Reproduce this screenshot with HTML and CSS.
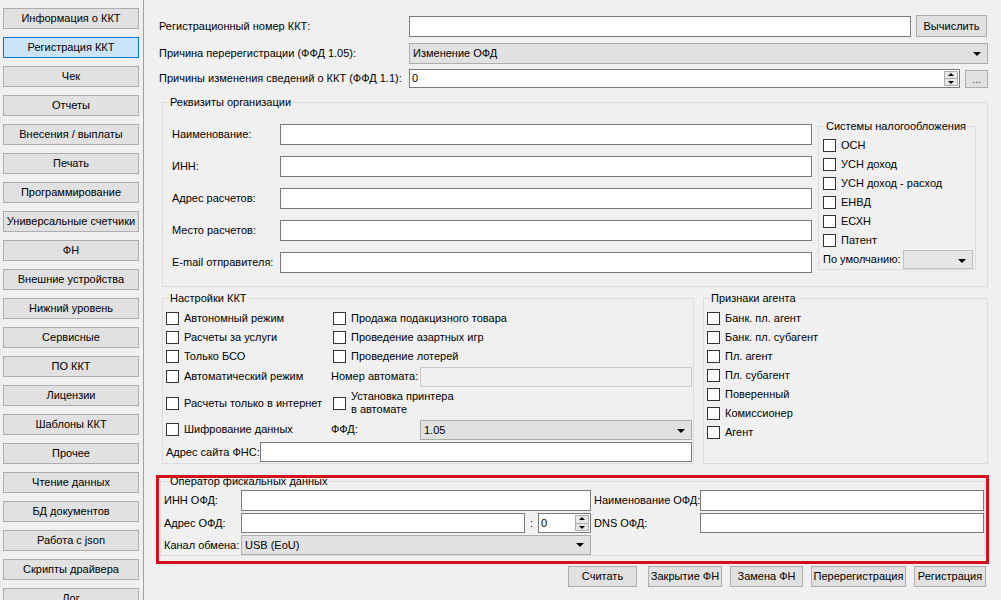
FILE: index.html
```html
<!DOCTYPE html>
<html lang="ru">
<head>
<meta charset="utf-8">
<title>Регистрация ККТ</title>
<link rel="stylesheet" href="styles.css">
</head>
<body>
<div class="app">
  <nav class="side">
    <button class="nav-btn">Информация о ККТ</button>
    <button class="nav-btn active">Регистрация ККТ</button>
    <button class="nav-btn">Чек</button>
    <button class="nav-btn">Отчеты</button>
    <button class="nav-btn">Внесения / выплаты</button>
    <button class="nav-btn">Печать</button>
    <button class="nav-btn">Программирование</button>
    <button class="nav-btn">Универсальные счетчики</button>
    <button class="nav-btn">ФН</button>
    <button class="nav-btn">Внешние устройства</button>
    <button class="nav-btn">Нижний уровень</button>
    <button class="nav-btn">Сервисные</button>
    <button class="nav-btn">ПО ККТ</button>
    <button class="nav-btn">Лицензии</button>
    <button class="nav-btn">Шаблоны ККТ</button>
    <button class="nav-btn">Прочее</button>
    <button class="nav-btn">Чтение данных</button>
    <button class="nav-btn">БД документов</button>
    <button class="nav-btn">Работа с json</button>
    <button class="nav-btn">Скрипты драйвера</button>
    <button class="nav-btn">Лог</button>
  </nav>

  <main class="main">
    <div class="row r1">
      <span class="lbl top-lbl">Регистрационный номер ККТ:</span>
      <div class="edit grow"></div>
      <button class="btn calc">Вычислить</button>
    </div>
    <div class="row r2">
      <span class="lbl top-lbl">Причина перерегистрации (ФФД 1.05):</span>
      <div class="combo grow">Изменение ОФД<span class="arrow"></span></div>
    </div>
    <div class="row r3">
      <span class="lbl top-lbl">Причины изменения сведений о ККТ (ФФД 1.1):</span>
      <div class="edit spin grow">0<span class="spin-btns"><span class="sb up"></span><span class="sb down"></span></span></div>
      <button class="btn dots">...</button>
    </div>

    <fieldset class="group req">
      <legend>Реквизиты организации</legend>
      <div class="req-body">
        <div class="req-form">
          <span class="lbl">Наименование:</span><div class="edit"></div>
          <span class="lbl">ИНН:</span><div class="edit"></div>
          <span class="lbl">Адрес расчетов:</span><div class="edit"></div>
          <span class="lbl">Место расчетов:</span><div class="edit"></div>
          <span class="lbl">E-mail отправителя:</span><div class="edit"></div>
        </div>
        <fieldset class="group tax">
          <legend>Системы налогообложения</legend>
          <div class="chk"><span class="box"></span>ОСН</div>
          <div class="chk"><span class="box"></span>УСН доход</div>
          <div class="chk"><span class="box"></span>УСН доход - расход</div>
          <div class="chk"><span class="box"></span>ЕНВД</div>
          <div class="chk"><span class="box"></span>ЕСХН</div>
          <div class="chk"><span class="box"></span>Патент</div>
          <div class="tax-def">
            <span class="lbl">По умолчанию:</span>
            <div class="combo disabled def-combo"><span class="arrow"></span></div>
          </div>
        </fieldset>
      </div>
    </fieldset>

    <div class="mid">
      <fieldset class="group settings">
        <legend>Настройки ККТ</legend>
        <div class="set-grid">
          <div class="chk"><span class="box"></span>Автономный режим</div>
          <div class="chk c2"><span class="box"></span>Продажа подакцизного товара</div>
          <div class="chk"><span class="box"></span>Расчеты за услуги</div>
          <div class="chk c2"><span class="box"></span>Проведение азартных игр</div>
          <div class="chk"><span class="box"></span>Только БСО</div>
          <div class="chk c2"><span class="box"></span>Проведение лотерей</div>
          <div class="chk"><span class="box"></span>Автоматический режим</div>
          <span class="lbl">Номер автомата:</span>
          <div class="edit disabled"></div>
          <div class="chk"><span class="box"></span>Расчеты только в интернет</div>
          <div class="chk c2 two"><span class="box"></span><span>Установка принтера<br>в автомате</span></div>
          <div class="chk"><span class="box"></span>Шифрование данных</div>
          <span class="lbl">ФФД:</span>
          <div class="combo">1.05<span class="arrow"></span></div>
        </div>
        <div class="fns-row">
          <span class="lbl">Адрес сайта ФНС:</span>
          <div class="edit grow"></div>
        </div>
      </fieldset>

      <fieldset class="group agent">
        <legend>Признаки агента</legend>
        <div class="chk"><span class="box"></span>Банк. пл. агент</div>
        <div class="chk"><span class="box"></span>Банк. пл. субагент</div>
        <div class="chk"><span class="box"></span>Пл. агент</div>
        <div class="chk"><span class="box"></span>Пл. субагент</div>
        <div class="chk"><span class="box"></span>Поверенный</div>
        <div class="chk"><span class="box"></span>Комиссионер</div>
        <div class="chk"><span class="box"></span>Агент</div>
      </fieldset>
    </div>

    <div class="highlight">
      <fieldset class="group ofd">
        <legend>Оператор фискальных данных</legend>
        <div class="ofd-grid">
          <span class="lbl">ИНН ОФД:</span>
          <div class="edit"></div>
          <span class="lbl rl">Наименование ОФД:</span>
          <div class="edit"></div>

          <span class="lbl">Адрес ОФД:</span>
          <div class="addr">
            <div class="edit grow"></div>
            <span class="colon">:</span>
            <div class="edit spin port">0<span class="spin-btns"><span class="sb up"></span><span class="sb down"></span></span></div>
          </div>
          <span class="lbl rl">DNS ОФД:</span>
          <div class="edit"></div>

          <span class="lbl">Канал обмена:</span>
          <div class="combo chan">USB (EoU)<span class="arrow"></span></div>
        </div>
      </fieldset>
    </div>

    <div class="actions">
      <button class="btn a1">Считать</button>
      <button class="btn a2">Закрытие ФН</button>
      <button class="btn a3">Замена ФН</button>
      <button class="btn a4">Перерегистрация</button>
      <button class="btn a5">Регистрация</button>
    </div>
  </main>
</div>
</body>
</html>
```

FILE: styles.css
```css
* { box-sizing: border-box; }

html, body {
  margin: 0;
  padding: 0;
  width: 1001px;
  height: 600px;
  overflow: hidden;
  background: #f0f0f0;
  font-family: "Liberation Sans", Arial, sans-serif;
  font-size: 11px;
  color: #000;
}

.app {
  display: flex;
  height: 600px;
}

/* Sidebar */
.side {
  width: 144px;
  flex: none;
  height: 600px;
  overflow: hidden;
  border-right: 1px solid #a0a0a0;
  padding: 8px 0 0 3px;
  display: flex;
  flex-direction: column;
  gap: 8px;
}

.nav-btn {
  flex: none;
  width: 136px;
  height: 21px;
  padding: 0;
  margin: 0;
  background: #e1e1e1;
  border: 1px solid #adadad;
  font: inherit;
  color: #000;
  text-align: center;
  line-height: 19px;
  white-space: nowrap;
}

.nav-btn.active {
  background: #cce4f7;
  border-color: #0078d7;
}

/* Main */
.main {
  flex: 1;
  padding: 0 13px 0 15px;
  display: flex;
  flex-direction: column;
}

.row {
  display: flex;
  align-items: center;
}

.r1 { margin-top: 15px; height: 22px; margin-right: 1px; }
.r2 { margin-top: 6px; height: 21px; }
.r3 { margin-top: 5px; height: 19px; }

.lbl {
  line-height: 13px;
  white-space: nowrap;
}

.top-lbl { width: 250px; flex: none; }

.grow { flex: 1; min-width: 0; }

.edit {
  height: 21px;
  background: #fff;
  border: 1px solid #7a7a7a;
  line-height: 19px;
  padding-left: 2px;
  position: relative;
}

.edit.disabled {
  background: #f0f0f0;
  border-color: #cccccc;
}

.combo {
  height: 21px;
  background: #e1e1e1;
  border: 1px solid #adadad;
  line-height: 19px;
  padding-left: 3px;
  position: relative;
  white-space: nowrap;
}

.combo.disabled {
  background: #e6e6e6;
  border-color: #bfbfbf;
}

.arrow {
  position: absolute;
  right: 6px;
  top: 8px;
  width: 0;
  height: 0;
  border-left: 4px solid transparent;
  border-right: 4px solid transparent;
  border-top: 4px solid #000;
}

.btn {
  height: 21px;
  padding: 0;
  margin: 0;
  background: #e1e1e1;
  border: 1px solid #adadad;
  font: inherit;
  color: #000;
  line-height: 19px;
  white-space: nowrap;
  text-align: center;
}

.calc { width: 71px; height: 22px; margin-left: 5px; }

.dots {
  width: 23px;
  height: 18px;
  margin-left: 5px;
  color: #444;
  line-height: 14px;
}

/* Spin boxes */
.spin { height: 19px; line-height: 17px; }

.spin-btns {
  position: absolute;
  right: 0;
  top: 0;
  bottom: 0;
  width: 15px;
  display: flex;
  flex-direction: column;
  padding: 1px 1px 1px 0;
  gap: 0;
}

.sb {
  flex: 1;
  background: #e8e8e8;
  border: 1px solid #adadad;
  position: relative;
}

.sb.up { border-bottom: none; }

.sb::after {
  content: "";
  position: absolute;
  left: 50%;
  top: 50%;
  margin-left: -3px;
  width: 0;
  height: 0;
  border-left: 3px solid transparent;
  border-right: 3px solid transparent;
}

.sb.up::after { border-bottom: 3px solid #000; margin-top: -2px; }
.sb.down::after { border-top: 3px solid #000; margin-top: -1px; }

/* Group boxes */
.group {
  margin: 0;
  border: 1px solid #dcdcdc;
  min-width: 0;
}

.group legend {
  padding: 0 1px;
  line-height: 13px;
}

.req {
  margin: 8px 0 0 3px;
  padding: 3px 11px 13px 9px;
}

.req legend { margin-left: -3px; }

.req-body {
  display: flex;
  align-items: flex-start;
  margin-top: 12px;
}

.req-form {
  display: grid;
  grid-template-columns: 108px 532px;
  grid-auto-rows: 21px;
  row-gap: 11px;
  align-items: center;
}

.req-form .edit { height: 21px; }

.tax {
  margin: -4px 0 0 6px;
  width: 158px;
  height: 150px;
  padding: 3px 2px 0 4px;
}

.tax legend { margin-left: 2px; }

.chk {
  display: flex;
  align-items: center;
  height: 19px;
  white-space: nowrap;
  line-height: 13px;
}

.box {
  flex: none;
  width: 13px;
  height: 13px;
  background: #fff;
  border: 1px solid #333;
  margin-right: 5px;
}

.tax-def {
  display: flex;
  align-items: center;
  justify-content: space-between;
  margin-top: 0;
}

.def-combo { width: 70px; height: 19px; }

/* Middle groups */
.mid {
  display: flex;
  margin: 5px 0 0 3px;
  gap: 9px;
}

.settings {
  width: 532px;
  flex: none;
  padding: 4px 1px 1px 3px;
}

.settings legend { margin-left: 3px; }

.set-grid {
  display: grid;
  grid-template-columns: 165px 89px 1fr;
  grid-template-rows: 19px 19px 19px 21px 32px 21px;
  align-items: center;
}

.set-grid .c2 { grid-column: 2 / 4; margin-left: 2px; }

.set-grid .edit, .set-grid .combo { height: 20px; }

.chk.two { height: 28px; align-items: center; }

.fns-row {
  display: flex;
  align-items: center;
  margin-top: 2px;
  height: 20px;
}

.fns-row .lbl { width: 94px; flex: none; }
.fns-row .edit { height: 20px; }

.agent {
  flex: 1;
  padding: 4px 3px 0 3px;
}

.agent legend { margin-left: 3px; }

/* Highlighted OFD block */
.highlight {
  margin: 11px -1px 0 -3px;
  border: 3px solid #d4101c;
  padding: 0 1px 5px 1px;
  overflow: hidden;
}

.ofd {
  margin-top: -3px;
  padding: 2px 0 0 3px;
}

.ofd legend { margin-left: 5px; }

.ofd-grid {
  display: grid;
  grid-template-columns: 77px 350px 109px 1fr;
  grid-template-rows: 21px 20px 20px;
  row-gap: 2px;
  align-items: center;
}

.ofd-grid .edit { height: 100%; }
.ofd-grid .rl { padding-left: 3px; }

.addr {
  display: flex;
  align-items: center;
  height: 100%;
}

.addr .edit { height: 20px; }

.colon { width: 13px; text-align: center; flex: none; }

.port { width: 53px; flex: none; height: 20px; line-height: 18px; }

.chan { height: 20px; line-height: 18px; }
.chan .arrow { top: 7px; }

/* Bottom buttons */
.actions {
  display: flex;
  justify-content: flex-end;
  gap: 8px;
  margin: 2px 2px 0 0;
}

.a1 { width: 69px; margin-right: 3px; }
.a2 { width: 74px; }
.a3 { width: 73px; }
.a4 { width: 95px; }
.a5 { width: 72px; }
```
